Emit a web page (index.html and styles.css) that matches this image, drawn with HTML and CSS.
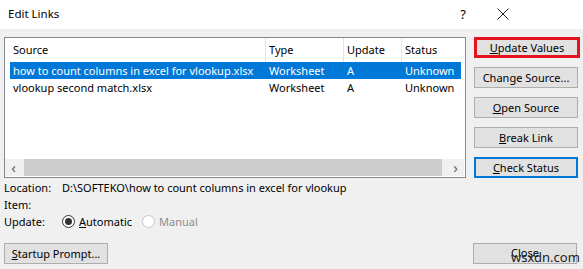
FILE: index.html
```html
<!DOCTYPE html>
<html lang="en">
<head>
    <meta charset="UTF-8">
    <meta name="viewport" content="width=device-width, initial-scale=1.0">
    <title>Edit Links</title>
    <link rel="stylesheet" href="styles.css">
</head>
<body>
    <div class="titlebar">
        <span class="title">Edit Links</span>
        <span class="controls">
            <span class="help">?</span>
            <svg class="close-x" width="12" height="12" viewBox="0 0 12 12">
                <path d="M0.5 0.5 L11.5 11.5 M11.5 0.5 L0.5 11.5" stroke="#222" stroke-width="1" fill="none"/>
            </svg>
        </span>
    </div>

    <div class="main">
        <div class="left">
            <div class="list">
                <div class="rows">
                    <div class="row head">
                        <div class="cell c-source">Source</div>
                        <div class="cell c-type">Type</div>
                        <div class="cell c-update">Update</div>
                        <div class="cell c-status">Status</div>
                    </div>
                    <div class="row sel">
                        <div class="cell c-source">how to count columns in excel for vlookup.xlsx</div>
                        <div class="cell c-type">Worksheet</div>
                        <div class="cell c-update">A</div>
                        <div class="cell c-status">Unknown</div>
                    </div>
                    <div class="row">
                        <div class="cell c-source">vlookup second match.xlsx</div>
                        <div class="cell c-type">Worksheet</div>
                        <div class="cell c-update">A</div>
                        <div class="cell c-status">Unknown</div>
                    </div>
                </div>
                <div class="hscroll">
                    <span class="arrow">&#8249;</span>
                    <span class="thumb"></span>
                    <span class="arrow">&#8250;</span>
                </div>
            </div>

            <div class="info">
                <div class="line"><span class="lbl">Location:</span><span>D:\SOFTEKO\how to count columns in excel for vlookup</span></div>
                <div class="line"><span class="lbl">Item:</span></div>
                <div class="line">
                    <span class="lbl">Update:</span>
                    <span class="radio">
                        <svg width="13" height="13" viewBox="0 0 13 13">
                            <circle cx="6.5" cy="6.5" r="6" fill="#fff" stroke="#333"/>
                            <circle cx="6.5" cy="6.5" r="3.5" fill="#333"/>
                        </svg>
                        <span><u>A</u>utomatic</span>
                    </span>
                    <span class="radio disabled">
                        <svg width="13" height="13" viewBox="0 0 13 13">
                            <circle cx="6.5" cy="6.5" r="6" fill="#fff" stroke="#c6c6c6"/>
                        </svg>
                        <span>Manual</span>
                    </span>
                </div>
            </div>
        </div>

        <div class="buttons">
            <div class="btn marked"><u>U</u>pdate Values</div>
            <div class="btn">Chan<u>g</u>e Source...</div>
            <div class="btn"><u>O</u>pen Source</div>
            <div class="btn"><u>B</u>reak Link</div>
            <div class="btn focus"><u>C</u>heck Status</div>
        </div>
    </div>

    <div class="footer">
        <div class="btn"><u>S</u>tartup Prompt...</div>
        <div class="btn close">Close<span class="watermark">wsxdn.com</span></div>
    </div>
</body>
</html>
```

FILE: styles.css
```css
body {
    margin: 0;
    width: 583px;
    height: 269px;
    background-color: #f0f0f0;
    font-family: "Noto Sans", "Open Sans", sans-serif;
    font-size: 11px;
    color: #000;
    overflow: hidden;
}

.titlebar {
    height: 29px;
    background-color: #fff;
    display: flex;
    align-items: center;
    justify-content: space-between;
    padding: 0 0 2px 8px;
    box-sizing: border-box;
}
.title {
    font-size: 11.5px;
}
.controls {
    display: flex;
    align-items: center;
    gap: 31px;
    padding-right: 74px;
}
.help {
    font-size: 13px;
}

.main {
    display: flex;
    padding: 8px 0 0 4px;
    gap: 8px;
}
.left {
    width: 462px;
}

.list {
    height: 141px;
    border: 1px solid #828790;
    background-color: #fff;
    box-sizing: border-box;
    display: flex;
    flex-direction: column;
}
.rows {
    flex: 1;
    overflow: hidden;
    padding-left: 5px;
}
.row {
    display: flex;
    height: 17px;
    align-items: center;
    white-space: nowrap;
    width: 451px;
    overflow: hidden;
}
.row.head {
    height: 24px;
}
.row.sel {
    background-color: #0078d7;
    color: #fff;
}
.cell {
    flex: none;
    padding-left: 3px;
    box-sizing: border-box;
    overflow: hidden;
}
.head .cell {
    height: 24px;
    line-height: 24px;
    border-right: 1px solid #e5e5e5;
}
.c-source { width: 256px; }
.c-type { width: 78px; }
.c-update { width: 58px; }
.c-status { width: 80px; }

.hscroll {
    height: 17px;
    margin: 0 1px 1px 0;
    background-color: #f0f0f0;
    display: flex;
    align-items: center;
    color: #606060;
}
.arrow {
    width: 17px;
    text-align: center;
    font-size: 15px;
    line-height: 17px;
}
.thumb {
    flex: 1;
    height: 17px;
    background-color: #cdcdcd;
    margin: 0 5px 0 2px;
}

.info {
    padding-top: 1px;
}
.line {
    display: flex;
    align-items: center;
    height: 17px;
}
.lbl {
    width: 58px;
}
.radio {
    display: flex;
    align-items: center;
    gap: 4px;
    margin-right: 10px;
}
.radio.disabled {
    color: #8d8d8d;
}

.buttons {
    display: flex;
    flex-direction: column;
    gap: 9px;
}
.btn {
    width: 104px;
    height: 21px;
    box-sizing: border-box;
    background-color: #e1e1e1;
    border: 1px solid #adadad;
    display: flex;
    align-items: center;
    justify-content: center;
    white-space: nowrap;
}
.btn.marked {
    width: 106px;
    border: 3px solid #e3141f;
}
.btn.focus {
    border: 2px solid #0078d7;
}

.footer {
    display: flex;
    justify-content: space-between;
    padding: 0 6px 0 4px;
    margin-top: 13px;
}
.close {
    position: relative;
    padding-bottom: 3px;
}
.watermark {
    position: absolute;
    left: 37px;
    top: 4px;
    font-size: 13px;
    color: #222;
}
```
